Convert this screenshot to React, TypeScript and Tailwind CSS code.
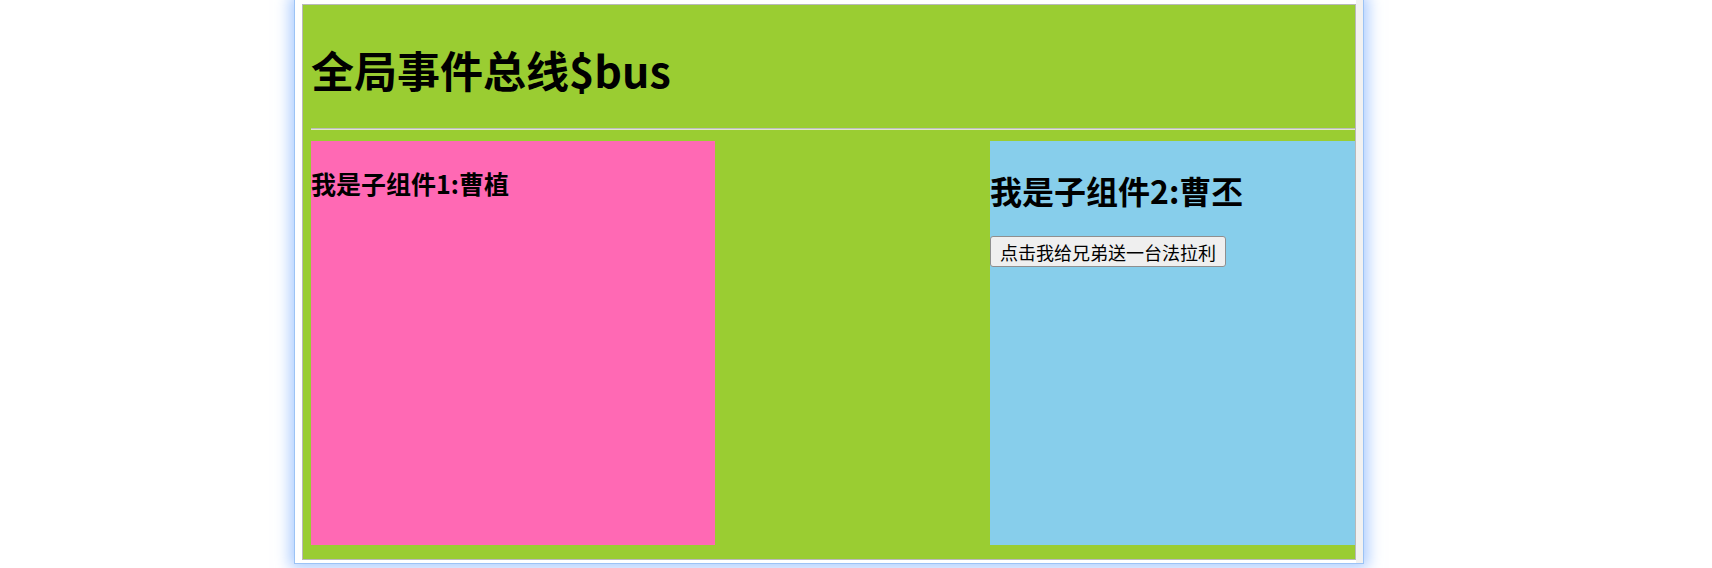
import * as React from "react";

const cjk = { fontFamily: '"Microsoft YaHei", "Noto Sans CJK SC", "Noto Sans", sans-serif' };

function ChildOne() {
  return (
    <div className="w-[404px] h-[404px] bg-[#ff69b4]">
      <h3 className="mt-[30px] text-[25px] leading-none font-bold text-black">我是子组件1:曹植</h3>
    </div>
  );
}

function ChildTwo() {
  return (
    <div className="w-[365px] h-[404px] bg-[#87ceeb]">
      <h2 className="mt-[33px] text-[32px] leading-none font-bold text-black">我是子组件2:曹丕</h2>
      <button className="mt-[30px] h-[31px] px-[9px] flex items-center text-[18px] leading-none text-black bg-[#efefef] border border-[#8f8f8f] rounded-[3px]">
        点击我给兄弟送一台法拉利
      </button>
    </div>
  );
}

export default function App() {
  return (
    <div className="w-[1712px] h-[568px] bg-white overflow-hidden" style={cjk}>
      <div className="ml-[294px] -mt-px w-[1070px] h-[565px] flex border border-[#9cc3f5] bg-white shadow-[0_0_14px_4px_rgba(100,160,255,0.55)]">
        <div className="flex-1 pl-[7px] pt-[4px] pb-[3px]">
          <div className="h-[556px] border border-[#b9b9b9] bg-[#9acd32] pl-[8px] overflow-hidden">
            <h1 className="mt-[43px] h-[44px] text-[43px] leading-none font-bold text-black">全局事件总线$bus</h1>
            <div className="mt-[36px] h-px bg-[#bdbdbd]" />
            <div className="h-px bg-[#dfe9c8]" />
            <div className="mt-[11px] flex justify-between">
              <ChildOne />
              <ChildTwo />
            </div>
          </div>
        </div>
        <div className="w-[7px] bg-[#f1f1f1]" />
      </div>
    </div>
  );
}
